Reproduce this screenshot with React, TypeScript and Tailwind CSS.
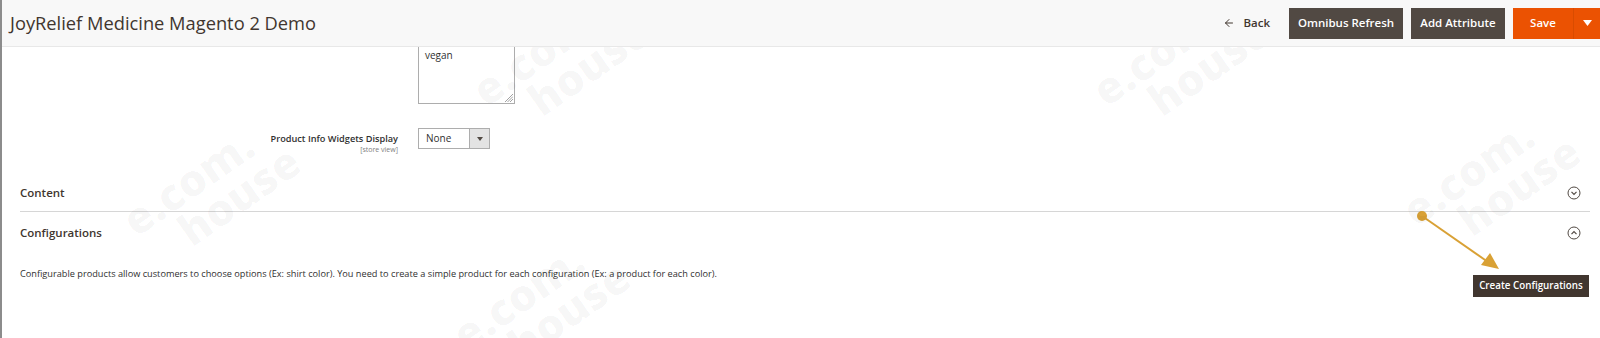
import { ArrowLeft } from "lucide-react"

const font = { fontFamily: '"Open Sans", "Liberation Sans", sans-serif' }

function Watermark({ className }: { className: string }) {
  return (
    <div
      aria-hidden
      className={`pointer-events-none absolute select-none text-[44px] font-extrabold leading-[40px] text-black/[0.03] -rotate-[35deg] ${className}`}
    >
      <div>e.com.</div>
      <div className="pl-10">house</div>
    </div>
  )
}

function CircleChevron({ up }: { up?: boolean }) {
  return (
    <svg width="14" height="14" viewBox="0 0 14 14" fill="none" stroke="#514943" strokeWidth="1">
      <circle cx="7" cy="7" r="6" />
      {up ? <path d="M4.5 8.2 7 5.7l2.5 2.5" strokeWidth="1.2" /> : <path d="M4.5 5.8 7 8.3l2.5-2.5" strokeWidth="1.2" />}
    </svg>
  )
}

export default function App() {
  return (
    <div className="relative h-[338px] w-[1600px] overflow-hidden border-l-2 border-[#8c8c8c] bg-white text-[#303030]" style={font}>
      <header className="relative z-10 flex h-[47px] items-center justify-between border-b border-[#e8e8e8] bg-[#f8f8f8] pl-[8px]">
        <h1 className="text-[18.3px] font-normal text-[#41362f]">JoyRelief Medicine Magento 2 Demo</h1>
        <div className="flex items-center">
          <button className="mr-[19px] flex items-center gap-[8px] text-[11.5px] font-semibold text-[#41362f]">
            <ArrowLeft size={12} strokeWidth={2} />
            Back
          </button>
          <button className="mr-[8px] h-[31px] w-[114px] bg-[#514943] text-[11.5px] font-semibold text-white">Omnibus Refresh</button>
          <button className="mr-[8px] h-[31px] w-[94px] bg-[#514943] text-[11.5px] font-semibold text-white">Add Attribute</button>
          <div className="flex h-[31px] w-[87px] bg-[#eb5202] text-white">
            <span className="flex w-[60px] items-center justify-center text-[11.5px] font-semibold">Save</span>
            <span className="flex flex-1 items-center justify-center border-l border-[#d94c00]">
              <svg width="9" height="6" viewBox="0 0 9 6"><path d="M0 0h9L4.5 6z" fill="white" /></svg>
            </span>
          </div>
        </div>
      </header>

      <main className="-mt-[20px] pr-[10px]">
        <div className="grid grid-cols-[396px_1fr] gap-x-[20px]">
          <div />
          <div className="relative h-[77px] w-[97px] border border-[#adadad] bg-white px-[6px] pt-[21px] text-[10px] leading-[13px]">
            vegan
            <svg className="absolute bottom-[1px] right-[1px]" width="9" height="9" viewBox="0 0 9 9" stroke="#8a8a8a" strokeWidth="0.8">
              <path d="M1 9 9 1M3.5 9 9 3.5M6 9 9 6" />
            </svg>
          </div>

          <div className="mt-[24px] flex flex-col items-end pt-[5px]">
            <span className="text-[9.2px] font-semibold leading-[12px] text-[#303030]">Product Info Widgets Display</span>
            <span className="text-[7px] leading-[9px] text-[#808080]">[store view]</span>
          </div>
          <div className="mt-[24px] flex h-[21px] w-[72px] border border-[#adadad] bg-white">
            <span className="flex flex-1 items-center pl-[7px] text-[10px]">None</span>
            <span className="flex w-[20px] items-center justify-center border-l border-[#adadad] bg-[#e3e3e3]">
              <svg width="6" height="4" viewBox="0 0 6 4"><path d="M0 0h6L3 4z" fill="#514943" /></svg>
            </span>
          </div>
        </div>

        <section className="ml-[18px] mt-[21px] flex h-[37px] items-center justify-between border-b border-[#d6d6d6] pr-[9px]">
          <h2 className="text-[11.5px] font-semibold text-[#41362f]">Content</h2>
          <CircleChevron />
        </section>
        <section className="ml-[18px] flex h-[42px] items-center justify-between pr-[9px]">
          <h2 className="text-[11.5px] font-semibold text-[#41362f]">Configurations</h2>
          <CircleChevron up />
        </section>
        <div className="ml-[18px] flex items-start justify-between pr-[1px]">
          <p className="mt-[13px] text-[9.2px] leading-[13px] text-[#303030]">
            Configurable products allow customers to choose options (Ex: shirt color). You need to create a simple product for each configuration (Ex: a product for each color).
          </p>
          <button className="mt-[21px] h-[22px] w-[116px] whitespace-nowrap bg-[#41362f] text-[9.8px] font-semibold text-white">Create Configurations</button>
        </div>
      </main>

      <svg className="pointer-events-none absolute left-0 top-0" width="1600" height="338" viewBox="0 0 1600 338">
        <circle cx="1420" cy="216" r="5" fill="#d9a135" />
        <path d="M1420 216 1486 262" stroke="#d9a135" strokeWidth="2" />
        <path d="M1497 269 1479 265 1488 253z" fill="#d9a135" />
      </svg>

      <Watermark className="left-[470px] top-[20px]" />
      <Watermark className="left-[1090px] top-[20px]" />
      <Watermark className="left-[120px] top-[150px]" />
      <Watermark className="left-[1400px] top-[140px]" />
      <Watermark className="left-[450px] top-[265px]" />
    </div>
  )
}
